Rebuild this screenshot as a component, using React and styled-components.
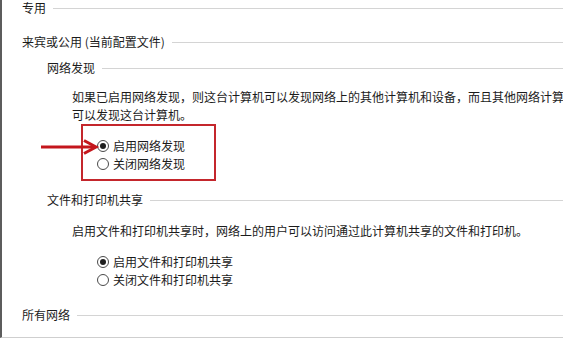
import React from "react";
import styled, { createGlobalStyle } from "styled-components";

const Global = createGlobalStyle`
  html, body { margin: 0; padding: 0; background: #fff; overflow: hidden; }
  body {
    font-family: "Noto Sans CJK SC", "Microsoft YaHei", sans-serif;
    font-size: 12px;
    color: #1b1b1b;
  }
`;

const Page = styled.div`
  box-sizing: border-box;
  width: 563px;
  height: 338px;
  border-left: 2px solid #5c5c5c;
  border-bottom: 1px solid #cfcfcf;
  padding-left: 20px;
  overflow: hidden;
  display: flex;
  flex-direction: column;
`;

const Heading = styled.div`
  display: flex;
  align-items: center;
  gap: 7px;
  height: 16px;
  line-height: 16px;
  white-space: nowrap;
  margin-top: ${(p) => p.$mt || 0}px;
  padding-left: ${(p) => p.$indent || 0}px;
`;

const Rule = styled.span`
  flex: 1;
  height: 1px;
  background: #d4d4d4;
`;

const Para = styled.div`
  line-height: 18px;
  white-space: nowrap;
  margin-top: ${(p) => p.$mt || 0}px;
  padding-left: 50px;
`;

const Highlight = styled.div`
  position: relative;
  box-sizing: border-box;
  align-self: flex-start;
  margin-left: 59px;
  margin-top: ${(p) => p.$mt || 0}px;
  width: 135px;
  height: 57px;
  border: 2px solid #c4262c;
  padding: 11px 0 0 14px;
`;

const Arrow = styled.svg`
  position: absolute;
  left: -43px;
  top: 13px;
`;

const Group = styled.div`
  display: flex;
  flex-direction: column;
  margin-top: ${(p) => p.$mt || 0}px;
  padding-left: ${(p) => p.$indent || 0}px;
`;

const Option = styled.label`
  display: flex;
  align-items: center;
  gap: 4px;
  height: 18px;
  line-height: 18px;
  white-space: nowrap;
`;

const Radio = styled.span`
  box-sizing: border-box;
  width: 12px;
  height: 12px;
  border-radius: 50%;
  border: 1px solid #4a4a4a;
  background: #fff;
  display: flex;
  align-items: center;
  justify-content: center;
  flex: none;
  &::after {
    content: "";
    width: 6px;
    height: 6px;
    border-radius: 50%;
    background: ${(p) => (p.$checked ? "#1f1f1f" : "transparent")};
  }
`;

const RadioOption = ({ checked, children }) => (
  <Option>
    <Radio $checked={checked} />
    <span>{children}</span>
  </Option>
);

export default function App() {
  return (
    <>
      <Global />
      <Page>
        <Heading>
          专用<Rule />
        </Heading>
        <Heading $mt={18}>
          来宾或公用 (当前配置文件)<Rule />
        </Heading>
        <Heading $mt={10} $indent={25}>
          网络发现<Rule />
        </Heading>
        <Para $mt={12}>
          如果已启用网络发现，则这台计算机可以发现网络上的其他计算机和设备，而且其他网络计算机也
          <br />
          可以发现这台计算机。
        </Para>
        <Highlight>
          <Arrow width="60" height="16" viewBox="0 0 60 16">
            <line x1="1" y1="8" x2="54" y2="8" stroke="#c4161c" strokeWidth="3" />
            <polyline
              points="44,1.5 56,8 44,14.5"
              fill="none"
              stroke="#c4161c"
              strokeWidth="3"
              strokeLinejoin="miter"
            />
          </Arrow>
          <RadioOption checked>启用网络发现</RadioOption>
          <RadioOption>关闭网络发现</RadioOption>
        </Highlight>
        <Heading $mt={11} $indent={25}>
          文件和打印机共享<Rule />
        </Heading>
        <Para $mt={14}>
          启用文件和打印机共享时，网络上的用户可以访问通过此计算机共享的文件和打印机。
        </Para>
        <Group $mt={13} $indent={75}>
          <RadioOption checked>启用文件和打印机共享</RadioOption>
          <RadioOption>关闭文件和打印机共享</RadioOption>
        </Group>
        <Heading $mt={18}>
          所有网络<Rule />
        </Heading>
      </Page>
    </>
  );
}
